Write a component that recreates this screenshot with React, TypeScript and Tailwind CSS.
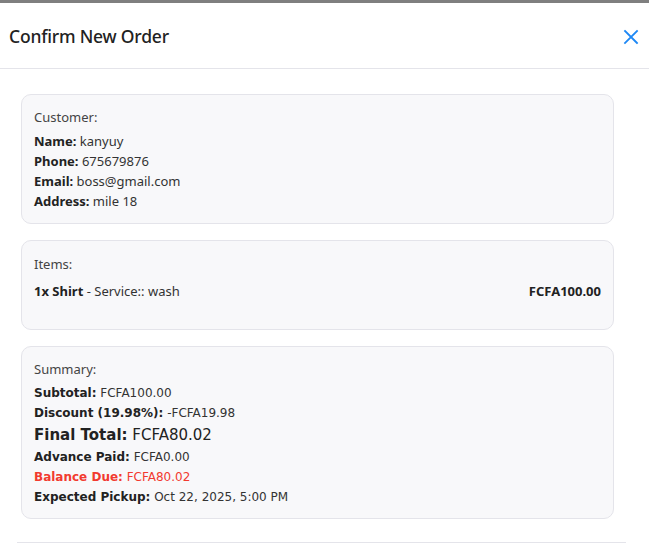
import React from "react";

const seg = { fontFamily: '"Noto Sans", "Open Sans", sans-serif' };
const tah = { fontFamily: '"DejaVu Sans", "Noto Sans", sans-serif' };

export default function App() {
  return (
    <div className="w-[649px] h-[548px] bg-white overflow-hidden" style={seg}>
      <div className="h-[3px] bg-[#7f7f7f]" />
      <div className="flex items-center justify-between h-[66px] border-b border-[#e4e4ea] pl-[9px] pr-[6px] pt-[2px]">
        <h1 className="text-[17.5px] font-medium text-[#222] tracking-[-0.2px]">Confirm New Order</h1>
        <svg width="24" height="24" viewBox="0 0 24 24" fill="none" stroke="#1e88f5" strokeWidth="1.8" strokeLinecap="square">
          <path d="M6 6l12 12M18 6L6 18" />
        </svg>
      </div>
      <div className="pt-[25px] px-[21px] pr-[35px] flex flex-col gap-[16px]">
        <div className="rounded-[10px] border border-[#e4e4ea] bg-[#f8f8fa] px-[12px] pt-[12px] pb-[12px] text-[13px] text-[#333] leading-[20px]">
          <div className="text-[#444] mb-[4px]">Customer:</div>
          <div><b className="font-bold text-[#222]">Name:</b> kanyuy</div>
          <div><b className="font-bold text-[#222]">Phone:</b> 675679876</div>
          <div><b className="font-bold text-[#222]">Email:</b> boss@gmail.com</div>
          <div><b className="font-bold text-[#222]">Address:</b> mile 18</div>
        </div>
        <div className="rounded-[10px] border border-[#e4e4ea] bg-[#f8f8fa] px-[12px] pt-[13px] pb-[28px] text-[13px] text-[#333] leading-[20px]">
          <div className="text-[#444] mb-[7px]">Items:</div>
          <div className="flex justify-between">
            <div><b className="font-bold text-[#222]">1x Shirt</b> - Service:: wash</div>
            <div className="font-bold text-[#222]">FCFA100.00</div>
          </div>
        </div>
        <div className="rounded-[10px] border border-[#e4e4ea] bg-[#f8f8fa] px-[12px] pt-[12px] pb-[11px] text-[13px] text-[#333] leading-[20px]">
          <div className="text-[#444] mb-[4px]">Summary:</div>
          <div style={tah} className="text-[12px]">
            <div><b className="font-bold text-[#222]">Subtotal:</b> FCFA100.00</div>
            <div><b className="font-bold text-[#222]">Discount (19.98%):</b> -FCFA19.98</div>
            <div className="text-[15px] leading-[24px] text-[#222]"><b className="font-bold">Final Total:</b> FCFA80.02</div>
            <div><b className="font-bold text-[#222]">Advance Paid:</b> FCFA0.00</div>
            <div className="text-[#f23a2f]"><b className="font-bold">Balance Due:</b> FCFA80.02</div>
            <div><b className="font-bold text-[#222]">Expected Pickup:</b> Oct 22, 2025, 5:00 PM</div>
          </div>
        </div>
      </div>
      <div className="mt-[23px] mx-[17px] w-[609px] border-t border-[#e4e4ea]" />
    </div>
  );
}
